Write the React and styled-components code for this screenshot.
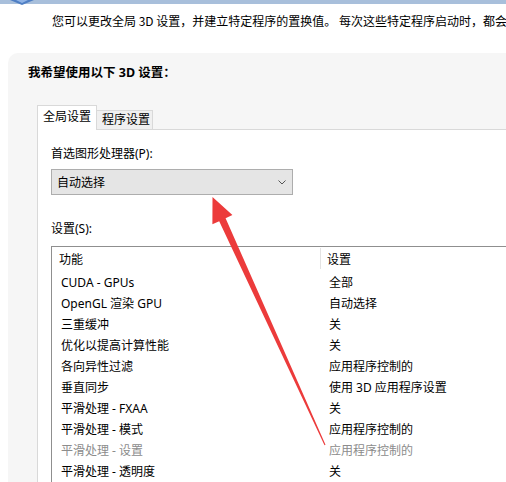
import React from "react";
import styled, { createGlobalStyle } from "styled-components";

const GlobalStyle = createGlobalStyle`
  html, body {
    margin: 0;
    padding: 0;
    background: #fff;
  }
  body {
    width: 506px;
    height: 482px;
    overflow: hidden;
    font-family: "Noto Sans", "Noto Sans CJK SC", sans-serif;
    font-size: 12px;
    color: #000;
  }
`;

const Page = styled.div`
  position: relative;
  width: 506px;
  height: 482px;
  overflow: hidden;
  display: flex;
  flex-direction: column;
`;

const TopBar = styled.div`
  flex-shrink: 0;
  height: 4px;
  background: #a8bfdb;
  padding-left: 8px;
  svg {
    display: block;
  }
`;

const Intro = styled.div`
  flex-shrink: 0;
  box-sizing: border-box;
  height: 49px;
  padding: 9px 0 0 52px;
  line-height: 16px;
  white-space: nowrap;
  font-family: "Noto Sans CJK SC", sans-serif;
`;

const Panel = styled.div`
  flex: 1;
  display: flex;
  flex-direction: column;
  margin-left: 8px;
  padding-top: 11px;
  background: #f6f6f6;
  border-top-left-radius: 10px;
  min-height: 0;
`;

const Title = styled.div`
  padding-left: 20px;
  line-height: 18px;
  font-size: 12.5px;
  font-weight: bold;
  white-space: nowrap;
`;

const TabRow = styled.div`
  display: flex;
  align-items: flex-end;
  height: 24px;
  margin: 23px 0 0 29px;
  position: relative;
  z-index: 1;
`;

const Tab = styled.div`
  box-sizing: border-box;
  white-space: nowrap;
  border: 1px solid #d9d9d9;
  border-bottom: none;
  ${({ $active }) =>
    $active
      ? `
    height: 25px;
    margin-bottom: -1px;
    padding: 0 5px;
    line-height: 22px;
    background: #fff;
  `
      : `
    height: 19px;
    padding: 0 2px 0 5px;
    line-height: 18px;
    border-left: none;
    background: #f0f0f0;
  `}
`;

const Pane = styled.div`
  flex: 1;
  margin-left: 29px;
  padding-left: 13px;
  background: #fff;
  border-top: 1px solid #d9d9d9;
  border-left: 1px solid #d9d9d9;
  display: flex;
  flex-direction: column;
  min-height: 0;
`;

const Label = styled.div`
  line-height: 16px;
  margin-top: ${({ $top }) => $top}px;
  white-space: nowrap;
`;

const Select = styled.div`
  box-sizing: border-box;
  width: 242px;
  height: 26px;
  margin-top: 7px;
  padding: 0 6px 0 5px;
  background: #e5e5e5;
  border: 1px solid #adadad;
  display: flex;
  align-items: center;
  justify-content: space-between;
  svg {
    display: block;
  }
`;

const ListBox = styled.div`
  flex: 1;
  margin-top: 9px;
  border-top: 1px solid #8f8f8f;
  border-left: 1px solid #8f8f8f;
  min-height: 0;
`;

const HeaderRow = styled.div`
  display: grid;
  grid-template-columns: 269px 1fr;
  height: 25px;
`;

const HeaderCell = styled.div`
  box-sizing: border-box;
  height: 21px;
  margin-top: 1px;
  padding: 2px 0 0 ${({ $pad }) => $pad}px;
  line-height: 19px;
  border-right: ${({ $sep }) => ($sep ? "1px solid #e3e3e3" : "none")};
`;

const Row = styled.div`
  display: grid;
  grid-template-columns: 270px 1fr;
  height: 21px;
  line-height: 21px;
  white-space: nowrap;
  color: ${({ $dim }) => ($dim ? "#8c8c8c" : "#000")};
`;

const Cell = styled.div`
  padding-left: ${({ $pad }) => $pad}px;
`;

const Overlay = styled.svg`
  position: absolute;
  left: 0;
  top: 0;
  pointer-events: none;
`;

const rows = [
  ["CUDA - GPUs", "全部"],
  ["OpenGL 渲染 GPU", "自动选择"],
  ["三重缓冲", "关"],
  ["优化以提高计算性能", "关"],
  ["各向异性过滤", "应用程序控制的"],
  ["垂直同步", "使用 3D 应用程序设置"],
  ["平滑处理 - FXAA", "关"],
  ["平滑处理 - 模式", "应用程序控制的"],
  ["平滑处理 - 设置", "应用程序控制的", true],
  ["平滑处理 - 透明度", "关"],
];

export default function App() {
  return (
    <Page>
      <GlobalStyle />
      <TopBar>
        <svg width="28" height="6" viewBox="0 0 28 6">
          <path d="M2 0 L14 5 L26 0 Z" fill="#4f7fc4" />
          <path d="M8 0 L14 3 L20 0 Z" fill="#8fb3e6" />
        </svg>
      </TopBar>
      <Intro>
        您可以更改全局 3D 设置，并建立特定程序的置换值。 每次这些特定程序启动时，都会自动使用置换值。
      </Intro>
      <Panel>
        <Title>我希望使用以下 3D 设置：</Title>
        <TabRow>
          <Tab $active>全局设置</Tab>
          <Tab>程序设置</Tab>
        </TabRow>
        <Pane>
          <Label $top={16}>首选图形处理器(P):</Label>
          <Select>
            <span>自动选择</span>
            <svg width="8" height="5" viewBox="0 0 8 5">
              <path d="M0.5 0.5 L4 4 L7.5 0.5" fill="none" stroke="#555" strokeWidth="1" />
            </svg>
          </Select>
          <Label $top={26}>设置(S):</Label>
          <ListBox>
            <HeaderRow>
              <HeaderCell $pad={7} $sep>功能</HeaderCell>
              <HeaderCell $pad={6}>设置</HeaderCell>
            </HeaderRow>
            {rows.map(([name, value, dim]) => (
              <Row key={name} $dim={dim}>
                <Cell $pad={9}>{name}</Cell>
                <Cell $pad={7}>{value}</Cell>
              </Row>
            ))}
          </ListBox>
        </Pane>
      </Panel>
      <Overlay width="506" height="482" viewBox="0 0 506 482">
        <polygon
          points="212.5,197 232.4,215.1 225.6,218.2 325.5,444.8 324.5,445.2 219.2,221.2 212.4,224.3"
          fill="#ec3b3b"
        />
      </Overlay>
    </Page>
  );
}
